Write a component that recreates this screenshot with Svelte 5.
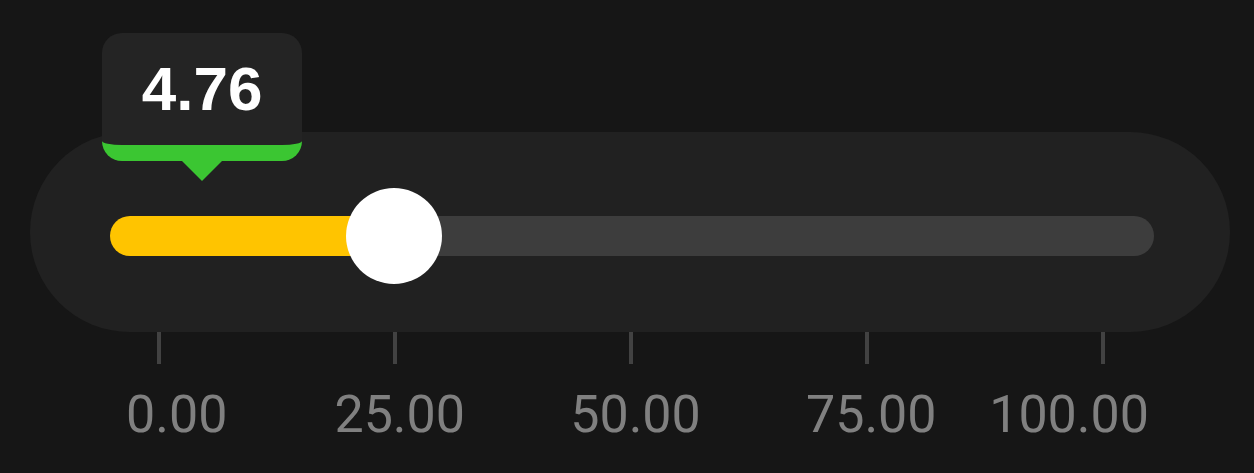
<script>
  const min = 0;
  const max = 100;
  const ticks = [0, 25, 50, 75, 100];

  let value = $state(24.9);
  let marker = $state(4.76);

  const share = (n) => (n - min) / (max - min);
</script>

<main>
  <div class="pill">
    <div class="slider" style="--value: {share(value)}; --marker: {share(marker)}">
      <input type="range" aria-label="Value" {min} {max} step="0.1" bind:value />
      <output class="bubble">{marker.toFixed(2)}</output>
    </div>
  </div>
  <div class="ticks">
    {#each ticks as tick (tick)}
      <i></i>
    {/each}
  </div>
  <div class="labels">
    {#each ticks as tick (tick)}
      <span>{tick.toFixed(2)}</span>
    {/each}
  </div>
</main>

<style>
  :global(body) {
    background: #161616;
  }

  main {
    padding: 132px 24px 24px 30px;
    font-family: Roboto, sans-serif;
  }

  .pill {
    padding: 84px 76px 76px 80px;
    border-radius: 100px;
    background: #212121;
  }

  .slider {
    position: relative;
    height: 40px;
  }

  input {
    display: block;
    appearance: none;
    width: 100%;
    height: 40px;
    margin: 0;
    border-radius: 20px;
    background: linear-gradient(#ffc400, #ffc400) no-repeat #3d3d3d;
    background-size: calc(48px + (100% - 96px) * var(--value)) 100%;
    cursor: pointer;
  }

  input::-webkit-slider-thumb {
    appearance: none;
    width: 96px;
    height: 96px;
    border-radius: 50%;
    background: #fff;
  }

  .bubble {
    position: absolute;
    bottom: calc(100% + 55px);
    left: calc(47px + (100% - 96px) * var(--marker));
    box-sizing: border-box;
    width: 200px;
    padding: 20px 0;
    border-bottom: 16px solid #3bc632;
    border-radius: 20px;
    background: #242424;
    color: #fff;
    font: bold 62px/72px "Liberation Sans", sans-serif;
    text-align: center;
    transform: translateX(-50%);
  }

  .bubble::after {
    content: "";
    position: absolute;
    top: calc(100% + 16px);
    left: 80px;
    border: 20px solid transparent;
    border-top-color: #3bc632;
    border-bottom: 0;
  }

  .ticks {
    display: flex;
    justify-content: space-between;
    padding: 0 125px 0 127px;
  }

  .ticks i {
    width: 4px;
    height: 32px;
    background: #424242;
  }

  .labels {
    display: grid;
    grid-template-columns: 39fr 59fr 59fr 59fr 40fr;
    margin: 21px 81px 0 96px;
    color: #808080;
    font-size: 52px;
    line-height: 60px;
    text-align: center;
  }

  .labels span:first-child {
    text-align: left;
  }

  .labels span:last-child {
    text-align: right;
  }
</style>
